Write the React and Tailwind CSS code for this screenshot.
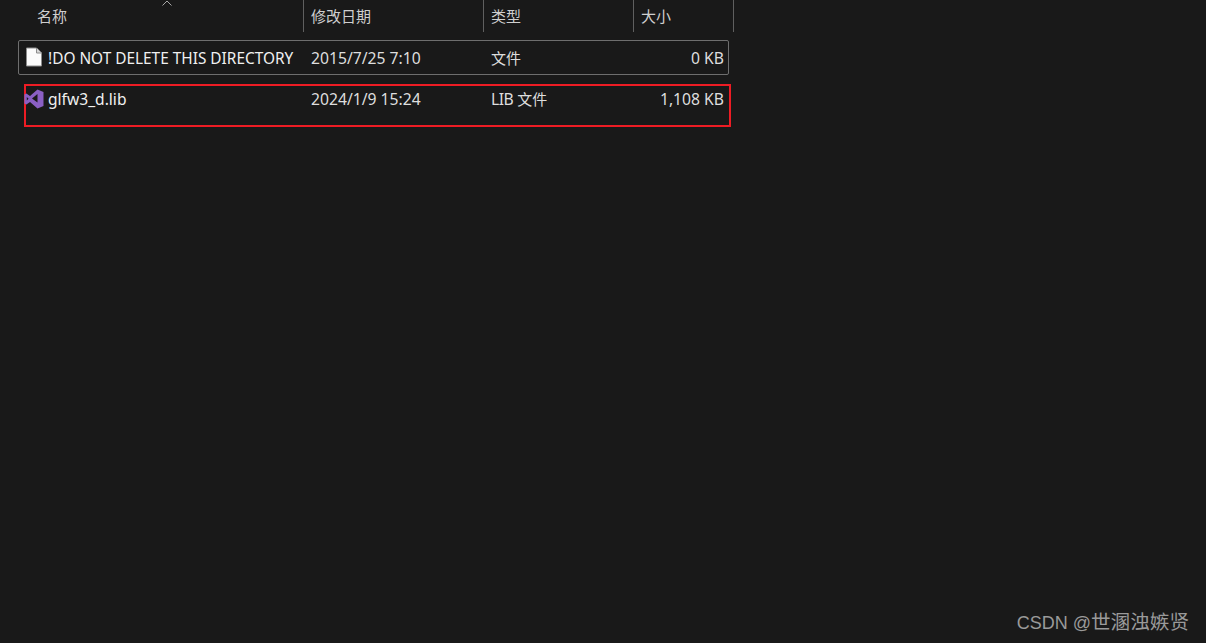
import React from 'react';

const FileIcon = () => (
    <svg width="18" height="20" viewBox="0 0 18 20" className="shrink-0">
        <path d="M1.5 1h10l5 5v13h-15z" fill="#fbfbfb" stroke="#8c8c8c" strokeWidth="1" />
        <path d="M11.5 1v5h5" fill="#d8d8d8" stroke="#8c8c8c" strokeWidth="1" />
    </svg>
);

const VsIcon = () => (
    <svg width="20" height="20" viewBox="0 0 20 20" className="shrink-0">
        <path d="M13.5 0.5l6 2.4v14.2l-6 2.4-7.5-6.5-3.6 2.6-2-1V5.4l2-1 3.6 2.6z" fill="#8a5fc4" />
        <path d="M13.5 5v8.5L8 9.5z" fill="#191919" />
        <path d="M2.8 8v3.6L4.6 9.8z" fill="#191919" />
    </svg>
);

const columns = [
    { label: '名称', width: 'w-[304px]', pad: 'pl-[37px]' },
    { label: '修改日期', width: 'w-[180px]', pad: 'pl-[7px]' },
    { label: '类型', width: 'w-[150px]', pad: 'pl-[7px]' },
    { label: '大小', width: 'w-[100px]', pad: 'pl-[7px]' },
];

const App = () => {
    return (
        <div className="relative flex h-[643px] w-[1206px] flex-col overflow-hidden bg-[#191919] font-['Noto_Sans','Noto_Sans_CJK_SC',sans-serif] text-[15.7px] text-[#dedede]">
            {/* Column header */}
            <div className="relative flex h-[32px] shrink-0 text-[15px] text-[#cfcfcf]">
                {columns.map((col) => (
                    <div key={col.label} className={`${col.width} ${col.pad} h-full border-r border-[#5f5f5f] pt-[6px] leading-[20px]`}>
                        {col.label}
                    </div>
                ))}
                {/* sort arrow */}
                <svg width="10" height="6" viewBox="0 0 10 6" className="absolute left-[162px] top-[0px]">
                    <path d="M0.5 5.5L5 1l4.5 4.5" fill="none" stroke="#a8a8a8" strokeWidth="1" />
                </svg>
            </div>

            {/* Selected row */}
            <div className="ml-[18px] mt-[8px] flex h-[35px] w-[711px] shrink-0 items-center rounded-[2px] border border-[#6e6e6e]">
                <div className="flex w-[284px] items-center pl-[6px]">
                    <FileIcon />
                    <span className="ml-[5px] mt-[2px] whitespace-nowrap text-[15.4px] text-[#f0f0f0]">!DO NOT DELETE THIS DIRECTORY</span>
                </div>
                <div className="mt-[2px] w-[180px] pl-[8px]">2015/7/25 7:10</div>
                <div className="mt-px w-[150px] pl-[8px] text-[15px]">文件</div>
                <div className="mt-[2px] flex-1 pr-[4px] text-right">0 KB</div>
            </div>

            {/* Second row, annotated with the red box */}
            <div className="ml-[24px] mt-[9px] h-[43px] w-[707px] shrink-0 border-2 border-[#ed1c24]">
                <div className="flex h-[27px] items-center">
                    <div className="flex w-[276px] items-center">
                        <div className="-ml-[2px]"><VsIcon /></div>
                        <span className="ml-[4px] whitespace-nowrap text-[15.6px] text-[#f0f0f0]">glfw3_d.lib</span>
                    </div>
                    <div className="w-[180px] pl-[9px]">2024/1/9 15:24</div>
                    <div className="w-[150px] pl-[9px]"><span className="tracking-[-0.5px]">LIB</span> <span className="text-[15px]">文件</span></div>
                    <div className="flex-1 pr-[5px] text-right">1,108 KB</div>
                </div>
            </div>

            {/* Watermark */}
            <div className="mt-auto mb-[7px] mr-[17px] self-end font-['Liberation_Sans','Noto_Sans_CJK_SC',sans-serif] text-[18px] leading-[26px] text-[#9a9a9a]">
                CSDN @<span className="text-[19.6px]">世溷浊嫉贤</span>
            </div>
        </div>
    );
};

export default App;
